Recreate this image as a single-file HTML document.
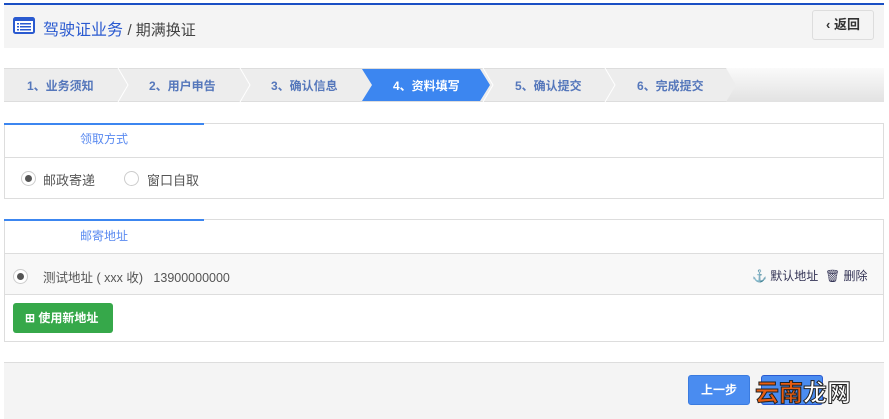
<!DOCTYPE html>
<html><head><meta charset="utf-8"><style>
*{margin:0;padding:0;box-sizing:border-box}
body{width:889px;height:419px;background:#fff;font-family:"Liberation Sans","Noto Sans CJK SC",sans-serif;position:relative;overflow:hidden;font-size:12px;color:#555}
.abs{position:absolute}
</style></head><body>
<div class="abs" style="left:4px;top:3px;width:880px;height:2px;background:#1a4fc4"></div>
<div class="abs" style="left:4px;top:5px;width:880px;height:43px;background:#f4f4f4"></div>
<svg class="abs" style="left:13px;top:17px" width="22" height="17" viewBox="0 0 22 17"><rect x="1" y="1" width="20" height="15" rx="1.5" fill="#fff" stroke="#2a5ad0" stroke-width="2"/><rect x="1" y="1" width="20" height="3" fill="#2a5ad0"/><g fill="#2a5ad0"><rect x="4" y="6" width="2" height="1.5"/><rect x="7" y="6" width="11" height="1.5"/><rect x="4" y="9" width="2" height="1.5"/><rect x="7" y="9" width="11" height="1.5"/><rect x="4" y="12" width="2" height="1.5"/><rect x="7" y="12" width="11" height="1.5"/></g></svg>
<div class="abs" style="left:43px;top:16px;font-size:16px;color:#2a5ad0">驾驶证业务 <span style="color:#444;font-size:15px">/ 期满换证</span></div>
<div class="abs" style="left:812px;top:10px;width:62px;height:30px;border:1px solid #ddd;border-radius:3px;background:#f4f4f4;font-size:13px;font-weight:bold;color:#333;line-height:28px;text-align:center">‹ 返回</div>

<svg class="abs" style="left:4px;top:68px" width="880" height="34">
<defs><linearGradient id="g" x1="0" y1="0" x2="0" y2="1"><stop offset="0" stop-color="#fafafa"/><stop offset="1" stop-color="#e2e2e2"/></linearGradient></defs>
<rect width="880" height="34" fill="url(#g)"/>
<rect width="735" height="34" fill="#ededed"/>
<rect y="0" width="880" height="1" fill="#ddd"/><rect y="33" width="880" height="1" fill="#ddd"/>
<polyline points="114,0 124,17 114,34" fill="none" stroke="#fff"/>
<polyline points="236,0 246,17 236,34" fill="none" stroke="#fff"/>
<polyline points="479,0 489,17 479,34" fill="none" stroke="#fff"/>
<polyline points="601,0 611,17 601,34" fill="none" stroke="#fff"/>
<polygon points="722,0 880,0 880,34 722,34 732,17" fill="url(#g)"/>
<polygon points="358,1 476,1 486,17 476,33 358,33 368,17" fill="#3c86f0"/>
</svg>
<div class="abs" style="top:77px;font-size:12px;font-weight:bold;color:#5577bb;left:27px">1、业务须知</div>
<div class="abs" style="top:77px;font-size:12px;font-weight:bold;color:#5577bb;left:149px">2、用户申告</div>
<div class="abs" style="top:77px;font-size:12px;font-weight:bold;color:#5577bb;left:271px">3、确认信息</div>
<div class="abs" style="top:77px;font-size:12px;font-weight:bold;color:#fff;left:393px">4、资料填写</div>
<div class="abs" style="top:77px;font-size:12px;font-weight:bold;color:#5577bb;left:515px">5、确认提交</div>
<div class="abs" style="top:77px;font-size:12px;font-weight:bold;color:#5577bb;left:637px">6、完成提交</div>

<div class="abs" style="left:4px;top:123px;width:880px;height:76px;border:1px solid #ddd"></div>
<div class="abs" style="left:4px;top:123px;width:200px;height:2px;background:#3c86f0"></div>
<div class="abs" style="left:5px;top:157px;width:878px;height:1px;background:#ddd"></div>
<div class="abs" style="left:80px;top:130px;color:#5a8af0">领取方式</div>
<div class="abs" style="left:21px;top:171px;width:15px;height:15px;border:1px solid #ccc;border-radius:50%;background:#fff"><div style="margin:3px;width:7px;height:7px;border-radius:50%;background:#555"></div></div>
<div class="abs" style="left:43px;top:170px;font-size:13px">邮政寄递</div>
<div class="abs" style="left:124px;top:171px;width:15px;height:15px;border:1px solid #ccc;border-radius:50%;background:#fff"></div>
<div class="abs" style="left:147px;top:170px;font-size:13px">窗口自取</div>

<div class="abs" style="left:4px;top:219px;width:880px;height:123px;border:1px solid #ddd"></div>
<div class="abs" style="left:4px;top:219px;width:200px;height:2px;background:#3c86f0"></div>
<div class="abs" style="left:5px;top:253px;width:878px;height:42px;background:#f8f8f8;border-top:1px solid #ddd;border-bottom:1px solid #ddd"></div>
<div class="abs" style="left:80px;top:227px;color:#5a8af0">邮寄地址</div>
<div class="abs" style="left:13px;top:269px;width:15px;height:15px;border:1px solid #ccc;border-radius:50%;background:#fff"><div style="margin:3px;width:7px;height:7px;border-radius:50%;background:#555"></div></div>
<div class="abs" style="left:43px;top:267px;font-size:12.5px;color:#555">测试地址 ( xxx 收)&nbsp;&nbsp; 13900000000</div>
<div class="abs" style="left:752px;top:267px;font-size:12px;color:#335">⚓ 默认地址&nbsp; 🗑 删除</div>
<div class="abs" style="left:13px;top:303px;width:100px;height:30px;background:#36a84a;border-radius:3px;color:#fff;font-weight:bold;font-size:12px;line-height:30px;padding-left:12px">⊞ 使用新地址</div>

<div class="abs" style="left:4px;top:362px;width:880px;height:57px;background:#f4f4f4;border-top:1px solid #ddd"></div>
<div class="abs" style="left:688px;top:375px;width:62px;height:30px;background:#4a8cf0;border:1px solid #3a7be0;border-radius:3px;color:#fff;font-weight:bold;line-height:28px;text-align:center">上一步</div>
<div class="abs" style="left:761px;top:375px;width:62px;height:30px;background:#4a8cf0;border:1px solid #2a5ad0;border-radius:3px"></div>
<div class="abs" style="left:755px;top:373px;font-size:24px;font-weight:bold;color:#e85d10;-webkit-text-stroke:1px #222">云南<span style="color:#fff">龙网</span></div>
</body></html>
